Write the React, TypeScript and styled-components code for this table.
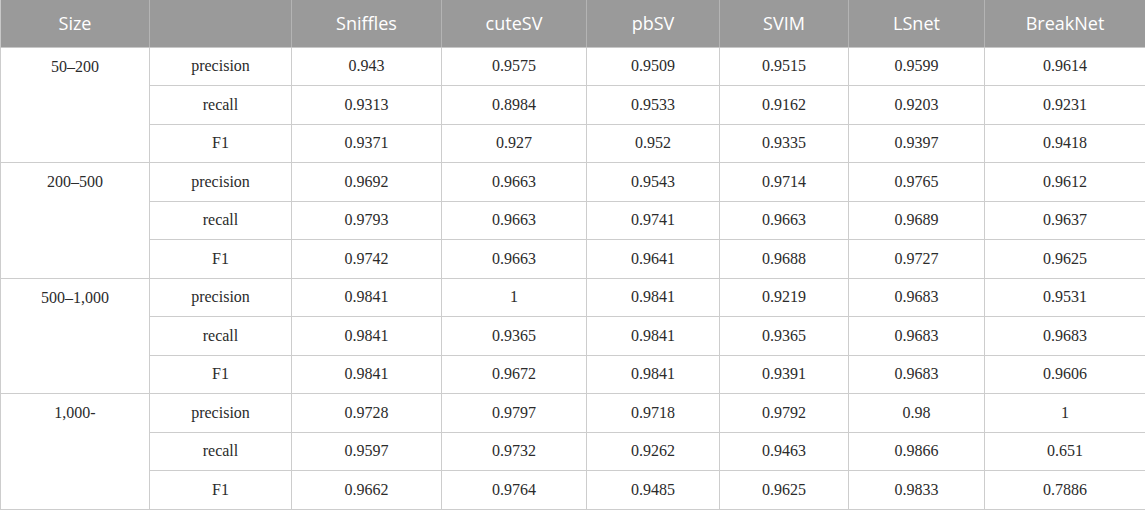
import React from "react";
import styled, { createGlobalStyle } from "styled-components";

const Global = createGlobalStyle`
  html, body { margin: 0; padding: 0; background: #fff; }
`;

const Table = styled.table`
  width: 1145px;
  border-collapse: collapse;
  table-layout: fixed;
  font-family: "Liberation Serif", "Times New Roman", serif;
  color: #2b2b2b;
`;

const HeadRow = styled.tr`
  height: 47px;
  background: #9a9a9a;
`;

const Th = styled.th`
  font-family: "Open Sans", "Noto Sans", sans-serif;
  font-weight: 400;
  font-size: 18px;
  color: #fff;
  text-align: center;
  vertical-align: middle;
  padding: 0 4px;
  border-left: 1px solid #b4b4b4;
  border-right: 1px solid #b4b4b4;
  border-bottom: 1px solid #c8c8c8;
  &:first-child { border-left: 1px solid #c8c8c8; }
  &:last-child { border-right: 1px solid #c8c8c8; }
`;

const Row = styled.tr`
  height: 38.5px;
`;

const Td = styled.td<{ $top?: boolean }>`
  font-size: 16px;
  text-align: center;
  vertical-align: ${(p) => (p.$top ? "top" : "middle")};
  padding: ${(p) => (p.$top ? "9px 4px 0" : "0 4px")};
  border: 1px solid #cdcdcd;
  line-height: 20px;
`;

const widths = [149, 142, 150, 145, 133, 129, 136, 161];
const tools = ["Sniffles", "cuteSV", "pbSV", "SVIM", "LSnet", "BreakNet"];
const metrics = ["precision", "recall", "F1"];

const groups: { size: string; rows: string[][] }[] = [
  {
    size: "50–200",
    rows: [
      ["0.943", "0.9575", "0.9509", "0.9515", "0.9599", "0.9614"],
      ["0.9313", "0.8984", "0.9533", "0.9162", "0.9203", "0.9231"],
      ["0.9371", "0.927", "0.952", "0.9335", "0.9397", "0.9418"],
    ],
  },
  {
    size: "200–500",
    rows: [
      ["0.9692", "0.9663", "0.9543", "0.9714", "0.9765", "0.9612"],
      ["0.9793", "0.9663", "0.9741", "0.9663", "0.9689", "0.9637"],
      ["0.9742", "0.9663", "0.9641", "0.9688", "0.9727", "0.9625"],
    ],
  },
  {
    size: "500–1,000",
    rows: [
      ["0.9841", "1", "0.9841", "0.9219", "0.9683", "0.9531"],
      ["0.9841", "0.9365", "0.9841", "0.9365", "0.9683", "0.9683"],
      ["0.9841", "0.9672", "0.9841", "0.9391", "0.9683", "0.9606"],
    ],
  },
  {
    size: "1,000-",
    rows: [
      ["0.9728", "0.9797", "0.9718", "0.9792", "0.98", "1"],
      ["0.9597", "0.9732", "0.9262", "0.9463", "0.9866", "0.651"],
      ["0.9662", "0.9764", "0.9485", "0.9625", "0.9833", "0.7886"],
    ],
  },
];

export default function App() {
  return (
    <>
      <Global />
      <Table>
        <colgroup>
          {widths.map((w, i) => (
            <col key={i} style={{ width: w }} />
          ))}
        </colgroup>
        <thead>
          <HeadRow>
            <Th>Size</Th>
            <Th />
            {tools.map((t) => (
              <Th key={t}>{t}</Th>
            ))}
          </HeadRow>
        </thead>
        <tbody>
          {groups.map((g) =>
            g.rows.map((r, i) => (
              <Row key={g.size + i}>
                {i === 0 && (
                  <Td $top rowSpan={3}>
                    {g.size}
                  </Td>
                )}
                <Td>{metrics[i]}</Td>
                {r.map((v, j) => (
                  <Td key={j}>{v}</Td>
                ))}
              </Row>
            ))
          )}
        </tbody>
      </Table>
    </>
  );
}
